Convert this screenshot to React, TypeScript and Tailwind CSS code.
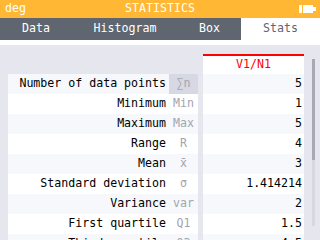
const rows = [
  { label: "Number of data points", symbol: "∑n", value: "5" },
  { label: "Minimum", symbol: "Min", value: "1" },
  { label: "Maximum", symbol: "Max", value: "5" },
  { label: "Range", symbol: "R", value: "4" },
  { label: "Mean", symbol: "x̄", value: "3" },
  { label: "Standard deviation", symbol: "σ", value: "1.414214" },
  { label: "Variance", symbol: "var", value: "2" },
  { label: "First quartile", symbol: "Q1", value: "1.5" },
  { label: "Third quartile", symbol: "Q3", value: "4.5" },
];

const tabs = [
  { name: "Data", width: "w-[72px]" },
  { name: "Histogram", width: "w-[106px]" },
  { name: "Box", width: "w-[63px]" },
];

const Battery = () => (
  <svg width="19" height="9" viewBox="0 0 19 9" className="block">
    <rect x="0" y="0" width="14" height="8" fill="#ffffff" />
    <rect x="3" y="0" width="1" height="8" fill="#ffb734" />
    <rect x="14" y="2" width="3" height="4" fill="#ffffff" />
  </svg>
);

export default function App() {
  return (
    <div className="w-[320px] h-[240px] overflow-hidden flex flex-col bg-[#e6e6ee] font-['DejaVu_Sans_Mono',monospace] text-[11.6px] leading-none">
      <div className="h-[18px] shrink-0 bg-[#ffb734] text-white flex items-center justify-between pl-[5px] pr-[2px] relative">
        <span>deg</span>
        <span className="absolute left-0 right-0 text-center">STATISTICS</span>
        <Battery />
      </div>

      <div className="h-[22px] shrink-0 bg-[#5f6670] flex">
        {tabs.map((t) => (
          <div key={t.name} className={`${t.width} flex items-center justify-center text-white`}>
            {t.name}
          </div>
        ))}
        <div className="flex-1 bg-white flex items-center justify-center text-[#5f6670]">Stats</div>
      </div>
      <div className="h-[5px] shrink-0 bg-white" />

      <div className="flex-1 min-h-0 overflow-hidden flex items-start pt-[9px] pl-[8px]">
        <div className="w-[190px] shrink-0 flex flex-col">
          <div className="h-[20px] shrink-0" />
          {rows.map((r, i) => (
            <div
              key={r.label}
              className={`h-[20px] shrink-0 flex ${i % 2 === 0 ? "bg-[#f6f8fc]" : "bg-white"}`}
            >
              <div className="w-[161px] flex items-center justify-end pr-[3px] text-black whitespace-nowrap">
                {r.label}
              </div>
              <div
                className={`w-[29px] flex items-center justify-center text-[#a3a5ae] ${i === 0 ? "bg-[#d6d8e4]" : ""}`}
              >
                {r.symbol}
              </div>
            </div>
          ))}
        </div>

        <div className="w-[101px] shrink-0 ml-[5px] flex flex-col">
          <div className="h-[20px] shrink-0 bg-white border-t-2 border-[#ff0000] flex items-center justify-center text-[#ff0000]">
            V1/N1
          </div>
          {rows.map((r, i) => (
            <div
              key={r.label}
              className={`h-[20px] shrink-0 flex items-center justify-end pr-[2px] text-black ${i % 2 === 0 ? "bg-[#f6f8fc]" : "bg-white"}`}
            >
              {r.value}
            </div>
          ))}
        </div>

        <div className="ml-[8px] mt-[5px] w-[3px] h-[167px] shrink-0 flex flex-col bg-[#d8d8e0]">
          <div className="h-[101px] bg-[#a9a9b3]" />
        </div>
      </div>
    </div>
  );
}
